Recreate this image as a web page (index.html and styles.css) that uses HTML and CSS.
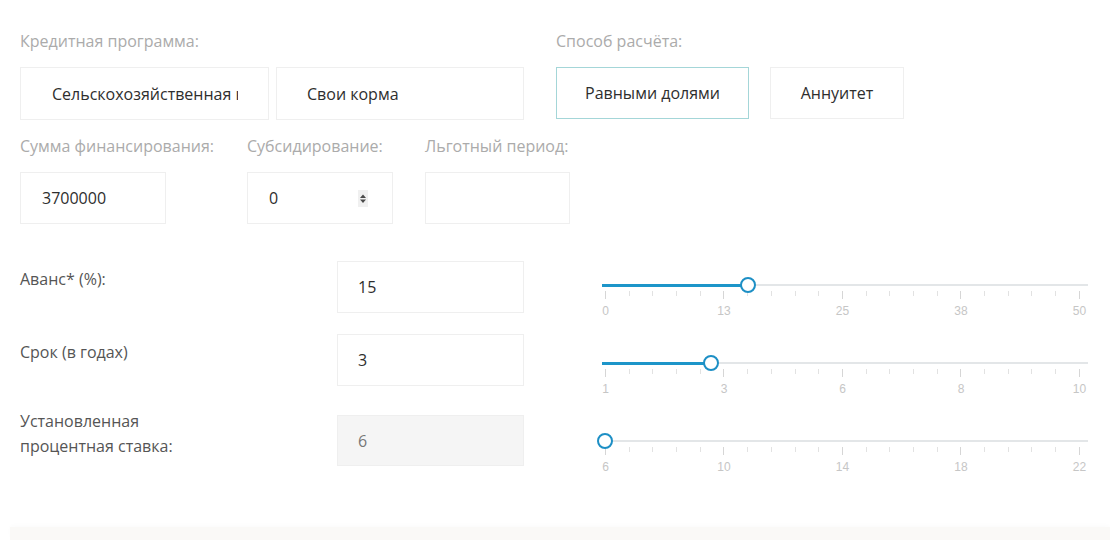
FILE: index.html
```html
<!DOCTYPE html>
<html lang="ru">
<head>
<meta charset="utf-8">
<title>Кредитный калькулятор</title>
<link rel="stylesheet" href="styles.css">
</head>
<body>
<div class="page">
  <div class="calc">
    <div class="row-top">
      <div class="group group-prog">
        <div class="label">Кредитная программа:</div>
        <div class="pair">
          <div class="select sel-prog"><span class="clip">Сельскохозяйственная кредитная программа</span></div>
          <div class="select sel-sub">Свои корма</div>
        </div>
      </div>
      <div class="group">
        <div class="label">Способ расчёта:</div>
        <div class="btns">
          <div class="btn btn-wide active">Равными долями</div>
          <div class="btn btn-narrow">Аннуитет</div>
        </div>
      </div>
    </div>

    <div class="row-mid">
      <div class="group group-sum">
        <div class="label">Сумма финансирования:</div>
        <div class="field">3700000</div>
      </div>
      <div class="group group-sub">
        <div class="label">Субсидирование:</div>
        <div class="field field-spin">0
          <span class="spin"><svg width="10" height="17" viewBox="0 0 10 17"><path d="M5 4.5 L8 8 H2 Z" fill="#4a4a4a"/><path d="M5 13 L8 9.5 H2 Z" fill="#4a4a4a"/></svg></span>
        </div>
      </div>
      <div class="group">
        <div class="label">Льготный период:</div>
        <div class="field field-narrow"></div>
      </div>
    </div>

    <div class="srow srow-1">
      <div class="slabel">Аванс* (%):</div>
      <div class="sfield">15</div>
      <div class="slider">
        <div class="rail">
          <div class="fill" style="width: calc(30% + 3px)"></div>
          <div class="thumb" style="left: 30%"></div>
        </div>
        <div class="ticks">
          <i class="major"></i><i></i><i></i><i></i><i></i><i class="major"></i><i></i><i></i><i></i><i></i><i class="major"></i><i></i><i></i><i></i><i></i><i class="major"></i><i></i><i></i><i></i><i></i><i class="major"></i>
        </div>
        <div class="nums"><span>0</span><span>13</span><span>25</span><span>38</span><span>50</span></div>
      </div>
    </div>

    <div class="srow srow-2">
      <div class="slabel">Срок (в годах)</div>
      <div class="sfield">3</div>
      <div class="slider">
        <div class="rail">
          <div class="fill" style="width: calc(22.22% + 3px)"></div>
          <div class="thumb" style="left: 22.22%"></div>
        </div>
        <div class="ticks">
          <i class="major"></i><i></i><i></i><i></i><i></i><i class="major"></i><i></i><i></i><i></i><i></i><i class="major"></i><i></i><i></i><i></i><i></i><i class="major"></i><i></i><i></i><i></i><i></i><i class="major"></i>
        </div>
        <div class="nums"><span>1</span><span>3</span><span>6</span><span>8</span><span>10</span></div>
      </div>
    </div>

    <div class="srow srow-3">
      <div class="slabel">Установленная<br>процентная ставка:</div>
      <div class="sfield disabled">6</div>
      <div class="slider">
        <div class="rail">
          <div class="fill" style="width: 3px"></div>
          <div class="thumb" style="left: 0%"></div>
        </div>
        <div class="ticks">
          <i class="major"></i><i></i><i></i><i></i><i></i><i class="major"></i><i></i><i></i><i></i><i></i><i class="major"></i><i></i><i></i><i></i><i></i><i class="major"></i><i></i><i></i><i></i><i></i><i class="major"></i>
        </div>
        <div class="nums"><span>6</span><span>10</span><span>14</span><span>18</span><span>22</span></div>
      </div>
    </div>
  </div>
  <div class="band"></div>
</div>
</body>
</html>
```

FILE: styles.css
```css
* { box-sizing: border-box; }
html, body { margin: 0; padding: 0; background: #fff; }
body {
  font-family: "Open Sans", "Noto Sans", sans-serif;
  color: #333;
  width: 1110px;
  height: 540px;
  overflow: hidden;
}
.page { padding-left: 10px; }
.calc { padding: 31px 10px 0 10px; height: 527px; }

.label {
  font-size: 16px;
  line-height: 20px;
  color: #ababab;
  white-space: nowrap;
  margin-bottom: 16px;
}

.row-top { display: flex; gap: 32px; }
.group-prog { width: 504px; }
.pair { display: flex; gap: 7px; }
.btns { display: flex; gap: 21px; }

.select, .btn, .field, .sfield {
  height: 53px;
  border: 1px solid #efefef;
  background: #fff;
  display: flex;
  align-items: center;
  font-size: 16px;
  color: #2e2e2e;
  white-space: nowrap;
}
.sel-prog { width: 249px; padding: 0 30px 0 31px; overflow: hidden; }
.sel-prog .clip { display: block; overflow: hidden; min-width: 0; }
.sel-sub { width: 248px; padding-left: 30px; }

.btn { justify-content: center; height: 52px; }
.btn-wide { width: 193px; }
.btn-narrow { width: 134px; }
.btn.active { border-color: #a4d6d8; }

.row-mid { display: flex; gap: 31px; margin-top: 16px; }
.group-sum { width: 196px; }
.group-sub { width: 147px; }
.field { width: 146px; height: 52px; padding-left: 21px; position: relative; }
.field-narrow { width: 145px; }
.spin {
  position: absolute;
  left: 110px;
  top: 17px;
  width: 10px;
  height: 17px;
  background: #f0f0f0;
  display: block;
}
.spin svg { display: block; }

.srow {
  display: grid;
  grid-template-columns: 317px 187px 486px;
  grid-template-rows: 52px;
  align-items: start;
}
.srow-1 { margin-top: 37px; }
.srow-2 { margin-top: 21px; }
.srow-3 { margin-top: 29px; }

.slabel {
  font-size: 16px;
  line-height: 25px;
  color: #555;
  align-self: center;
  padding-bottom: 15px;
}
.sfield { width: 187px; height: 52px; padding-left: 20px; }
.sfield.disabled { background: #f5f5f5; color: #777; height: 51px; }

.slider { margin-left: 78px; margin-top: 23px; width: 486px; }
.srow-2 .slider { margin-top: 28px; }
.srow-3 .slider { margin-top: 25px; }

.rail {
  position: relative;
  margin: 0 8px 0 3px;
  height: 2px;
}
.rail::before {
  content: "";
  position: absolute;
  left: -3px;
  right: -8px;
  top: 0;
  height: 2px;
  background: #e3e6e8;
}
.fill {
  position: absolute;
  left: -3px;
  top: -0.5px;
  height: 3px;
  background: #1d95c9;
}
.thumb {
  position: absolute;
  top: 1px;
  width: 16px;
  height: 16px;
  border: 2.5px solid #1d8fc5;
  border-radius: 50%;
  background: #fff;
  transform: translate(-50%, -50%);
}
.ticks {
  display: flex;
  justify-content: space-between;
  margin: 5px 8px 0 3px;
  height: 8px;
  align-items: flex-start;
}
.ticks i {
  display: block;
  width: 1px;
  height: 5px;
  background: #e2e2e2;
}
.ticks i.major { height: 8px; background: #d6d6d6; }
.nums {
  display: flex;
  justify-content: space-between;
  margin: 5px 8px 0 3px;
  font-family: "Liberation Sans", Arial, sans-serif;
  font-size: 12px;
  line-height: 14px;
  color: #c6c6c6;
}
.nums span {
  width: 1px;
  display: flex;
  justify-content: center;
  white-space: nowrap;
}

.band {
  height: 13px;
  background: #faf9f7;
  box-shadow: 0 -2px 4px rgba(0,0,0,0.015);
}
```
